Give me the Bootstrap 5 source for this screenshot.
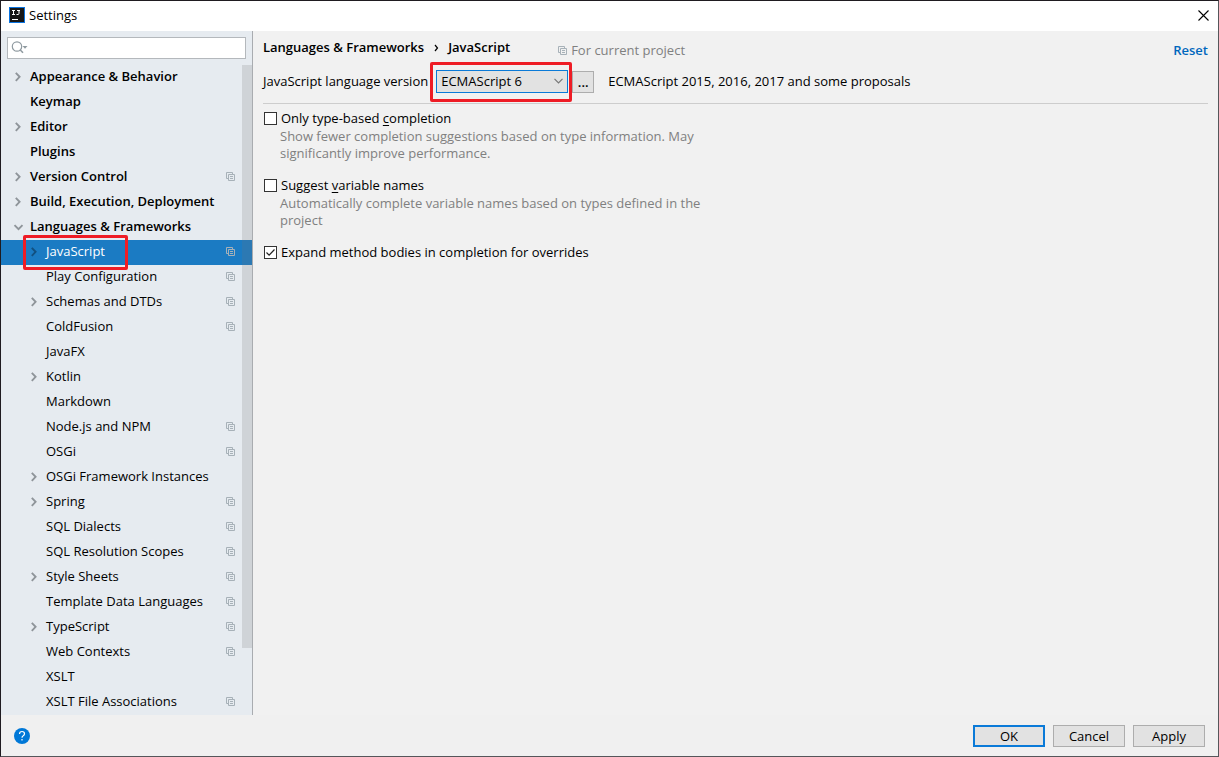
<!DOCTYPE html>
<html lang="en">
<head>
<meta charset="utf-8">
<meta name="viewport" content="width=device-width, initial-scale=1">
<title>Settings</title>
<link href="https://cdn.jsdelivr.net/npm/bootstrap@5.3.0/dist/css/bootstrap.min.css" rel="stylesheet">
<style>
  body {
    font-family: "Open Sans", "Noto Sans", sans-serif;
    font-size: 13px;
    line-height: 17px;
    color: #000;
    background: #f1f1f1;
  }
  .app-window { border: 1px solid #1f1b20; border-right-color: #55565a; border-bottom-color: #55565a; }
  .titlebar { height: 30px; background: #fff; padding: 0 9px 2px 8px; }
  .plain-btn { border: 0; background: none; padding: 0; color: inherit; line-height: 1; display: flex; }

  /* Settings tree */
  .sidebar { width: 252px; background: #e6ebf0; border-right: 1px solid #a9acb0; }
  .search-wrap { margin: 6px; }
  .search-box { height: 22px; border: 1px solid #b4b8bc; border-radius: 0; background: #fff; padding: 0 6px 0 24px; font-size: 13px; }
  .search-icon { left: 4px; top: 3px; pointer-events: none; }
  .tree-item { height: 25px; padding: 0 17px 2px 9px; color: #000; text-decoration: none; }
  .tree-item.top-level { font-weight: 600; }
  .tree-item.nested { padding-left: 25px; }
  .tree-item.selected { background: #1b7bc3; color: #fff; }
  .tree-arrow { width: 16px; margin-right: 4px; color: #8f959a; }
  .selected .tree-arrow { color: #12507f; }
  .scope-icon { color: #a7b1b8; }
  .scroll-thumb { width: 10px; top: 0; right: 0; bottom: 67px; background: rgba(115, 115, 115, .2); }
  .marker { border: 3px solid #ee1c25; border-radius: 2px; pointer-events: none; }
  .marker-tree { left: 22px; top: -5px; width: 105px; height: 35px; z-index: 2; }
  .marker-combo { inset: -8px -4px -9px -6px; }

  /* Options pane */
  .pane { padding: 8px 10px 16px 10px; }
  .crumbs { font-weight: 600; height: 17px; }
  .project-note { color: #808080; margin-left: 48px; padding-top: 3px; height: 20px; }
  .reset-link { color: #0067bd; font-weight: 600; text-decoration: none; padding-top: 3px; }
  .version-row { padding: 11px 0 10px; border-bottom: 1px solid #cdcdcd; }
  .combo { height: 23px; width: 132px; border: 1px solid #0a7ad8; background: #e2e2e2; color: #000; padding: 0 4px; appearance: none; }
  .combo-chevron { right: 5px; top: 8px; pointer-events: none; }
  .push-btn { height: 22px; border: 1px solid #adadad; border-radius: 0; background: #e2e2e2; padding: 0; font-size: 13px; line-height: 18px; color: #000; }
  .more-btn { width: 22px; margin-left: 4px; font-weight: 600; }
  .version-note { margin-left: 14px; }
  .dialog-btn { width: 72px; }
  .push-btn.default-btn { border: 2px solid #0a7ad8; line-height: 16px; }
  .options { padding: 6px 0 0 1px; }
  .tick {
    appearance: none; flex: none; width: 13px; height: 13px; margin: 0 4px 0 0;
    border: 1px solid #333; background: #fff center / 11px 11px no-repeat;
  }
  .tick:checked { background-image: url("data:image/svg+xml,%3Csvg xmlns='http://www.w3.org/2000/svg' viewBox='0 0 11 11'%3E%3Cpath d='M1.5 5.5l2.6 2.7L9.5 2.5' fill='none' stroke='%23222' stroke-width='1.2'/%3E%3C/svg%3E"); }
  .option { margin-bottom: 15px; }
  .hint { color: #808080; max-width: 440px; margin: 1px 0 0; padding-left: 16px; }
  .label-u { text-decoration: underline; text-underline-offset: 2px; }

  .dialog-footer { height: 41px; background: #f0f0f0; padding: 0 13px; }
</style>
</head>
<body>
<svg class="d-none" aria-hidden="true">
  <symbol id="scope" viewBox="0 0 9 9">
    <path d="M2 6.5H.5v-6h6V2M2.5 2.5h6v6h-6zM4 4.5h3M4 6.5h3" fill="none" stroke="currentColor"/>
  </symbol>
  <symbol id="arrow-right" viewBox="0 0 16 16">
    <path d="M5.800 3.800L9.600 7.800l-3.800 4" fill="none" stroke="currentColor" stroke-width="1.900"/>
  </symbol>
  <symbol id="arrow-down" viewBox="0 0 16 16">
    <path d="M4.500 6.200l4 4 4-4" fill="none" stroke="currentColor" stroke-width="1.900"/>
  </symbol>
</svg>

<div class="app-window d-flex flex-column min-vh-100">
  <header class="titlebar d-flex align-items-center">
    <svg width="16" height="16" viewBox="0 0 16 16" aria-hidden="true">
      <rect width="16" height="16" fill="#0a73e0"/>
      <rect x="1" y="1" width="14" height="14" fill="#161616"/>
      <path d="M3 3.500h3M4.500 3.500v4M3 7.500h3M8 3.500h3M10 3.500v3q0 1-1 1h-1.500M3 12.500h6" fill="none" stroke="#fff"/>
    </svg>
    <span class="ms-1">Settings</span>
    <button class="plain-btn ms-auto" type="button" aria-label="Close">
      <svg width="11" height="11" viewBox="0 0 11 11"><path d="M.5.5l10 10M10.500.5l-10 10" fill="none" stroke="#000" stroke-width="1.100"/></svg>
    </button>
  </header>

  <div class="d-flex flex-grow-1">
    <aside class="sidebar flex-shrink-0">
      <div class="search-wrap position-relative">
        <input class="search-box w-100 d-block" type="search" aria-label="Search settings">
        <svg class="search-icon position-absolute" width="18" height="16" viewBox="0 0 18 16" aria-hidden="true">
          <circle cx="6" cy="6.500" r="4.700" fill="none" stroke="#8f9aa0" stroke-width="1.200"/>
          <path d="M9.300 10l2.700 2.800" stroke="#8f9aa0" stroke-width="1.500"/>
          <path d="M11.500 6h5L14 8.800z" fill="#8f9aa0"/>
        </svg>
      </div>
      <div class="position-relative">
        <nav id="tree" class="d-flex flex-column" aria-label="Settings categories"></nav>
        <div class="scroll-thumb position-absolute"></div>
      </div>
    </aside>

    <main class="pane flex-grow-1">
      <div class="d-flex align-items-start">
        <div class="crumbs d-flex align-items-center">
          <span>Languages &amp; Frameworks</span>
          <svg class="mx-2" width="8" height="8" viewBox="0 0 8 8" aria-hidden="true"><path d="M3 1l2.500 3L3 7" fill="none" stroke="#000" stroke-width="1.200"/></svg>
          <span>JavaScript</span>
        </div>
        <div class="project-note d-flex align-items-center">
          <svg class="scope-icon me-1" width="9" height="9" aria-hidden="true"><use href="#scope"/></svg>
          <span>For current project</span>
        </div>
        <a class="reset-link ms-auto" href="#">Reset</a>
      </div>

      <div class="version-row d-flex align-items-center">
        <label for="version">JavaScript language version</label>
        <div class="position-relative ms-2">
          <select id="version" class="combo d-block">
            <option>ECMAScript 6</option>
          </select>
          <svg class="combo-chevron position-absolute" width="9" height="6" viewBox="0 0 9 6" aria-hidden="true"><path d="M.5.8l4 4 4-4" fill="none" stroke="#777" stroke-width="1.200"/></svg>
          <div class="marker marker-combo position-absolute"></div>
        </div>
        <button class="push-btn more-btn" type="button" aria-label="Configure dialects">...</button>
        <span class="version-note">ECMAScript 2015, 2016, 2017 and some proposals</span>
      </div>

      <div class="options">
        <div class="option">
          <div class="d-flex align-items-center">
            <input class="tick" type="checkbox" id="type-based">
            <label for="type-based">Only type-based <span class="label-u">c</span>ompletion</label>
          </div>
          <p class="hint">Show fewer completion suggestions based on type information. May significantly improve performance.</p>
        </div>
        <div class="option">
          <div class="d-flex align-items-center">
            <input class="tick" type="checkbox" id="suggest">
            <label for="suggest">Suggest <span class="label-u">v</span>ariable names</label>
          </div>
          <p class="hint">Automatically complete variable names based on types defined in the project</p>
        </div>
        <div class="d-flex align-items-center">
          <input class="tick" type="checkbox" id="expand" checked>
          <label for="expand">Expand method bodies in completion for overrides</label>
        </div>
      </div>
    </main>
  </div>

  <footer class="dialog-footer d-flex align-items-center gap-2">
    <button class="plain-btn me-auto" type="button" aria-label="Help">
      <svg width="16" height="16" viewBox="0 0 16 16">
        <circle cx="8" cy="8" r="8" fill="#0078d7"/>
        <path d="M5.500 6q0-2.500 2.500-2.500t2.500 2.200q0 1.200-1.300 2Q8 8.400 8 9.700M8 11v1.500" fill="none" stroke="#fff" stroke-width="1.200"/>
      </svg>
    </button>
    <button class="push-btn dialog-btn default-btn" type="button">OK</button>
    <button class="push-btn dialog-btn" type="button">Cancel</button>
    <button class="push-btn dialog-btn" type="button">Apply</button>
  </footer>
</div>

<script src="https://cdn.jsdelivr.net/npm/bootstrap@5.3.0/dist/js/bootstrap.bundle.min.js"></script>
<script>
  // name, level, arrow (right / down / none), has project scope
  const items = [
    ['Appearance & Behavior', 0, 'right', 0], ['Keymap', 0, '', 0], ['Editor', 0, 'right', 0],
    ['Plugins', 0, '', 0], ['Version Control', 0, 'right', 1],
    ['Build, Execution, Deployment', 0, 'right', 0], ['Languages & Frameworks', 0, 'down', 0],
    ['JavaScript', 1, 'right', 1], ['Play Configuration', 1, '', 1], ['Schemas and DTDs', 1, 'right', 1],
    ['ColdFusion', 1, '', 1], ['JavaFX', 1, '', 0], ['Kotlin', 1, 'right', 0], ['Markdown', 1, '', 0],
    ['Node.js and NPM', 1, '', 1], ['OSGi', 1, '', 1], ['OSGi Framework Instances', 1, 'right', 0],
    ['Spring', 1, 'right', 1], ['SQL Dialects', 1, '', 1], ['SQL Resolution Scopes', 1, '', 1],
    ['Style Sheets', 1, 'right', 1], ['Template Data Languages', 1, '', 1], ['TypeScript', 1, 'right', 1],
    ['Web Contexts', 1, '', 1], ['XSLT', 1, '', 0], ['XSLT File Associations', 1, '', 1]
  ];
  document.getElementById('tree').innerHTML = items.map(([name, level, arrow, scope]) => {
    const selected = name === 'JavaScript';
    return `<a href="#" class="tree-item d-flex align-items-center position-relative ${level ? 'nested' : 'top-level'} ${selected ? 'selected' : ''}">
      <svg class="tree-arrow flex-shrink-0" width="16" height="16" aria-hidden="true">${arrow ? `<use href="#arrow-${arrow}"/>` : ''}</svg>
      <span class="flex-grow-1 text-nowrap">${name.replace('&', '&amp;')}</span>
      ${scope ? '<svg class="scope-icon" width="9" height="9" aria-hidden="true"><use href="#scope"/></svg>' : ''}
      ${selected ? '<span class="marker marker-tree position-absolute"></span>' : ''}
    </a>`;
  }).join('');
</script>
</body>
</html>
